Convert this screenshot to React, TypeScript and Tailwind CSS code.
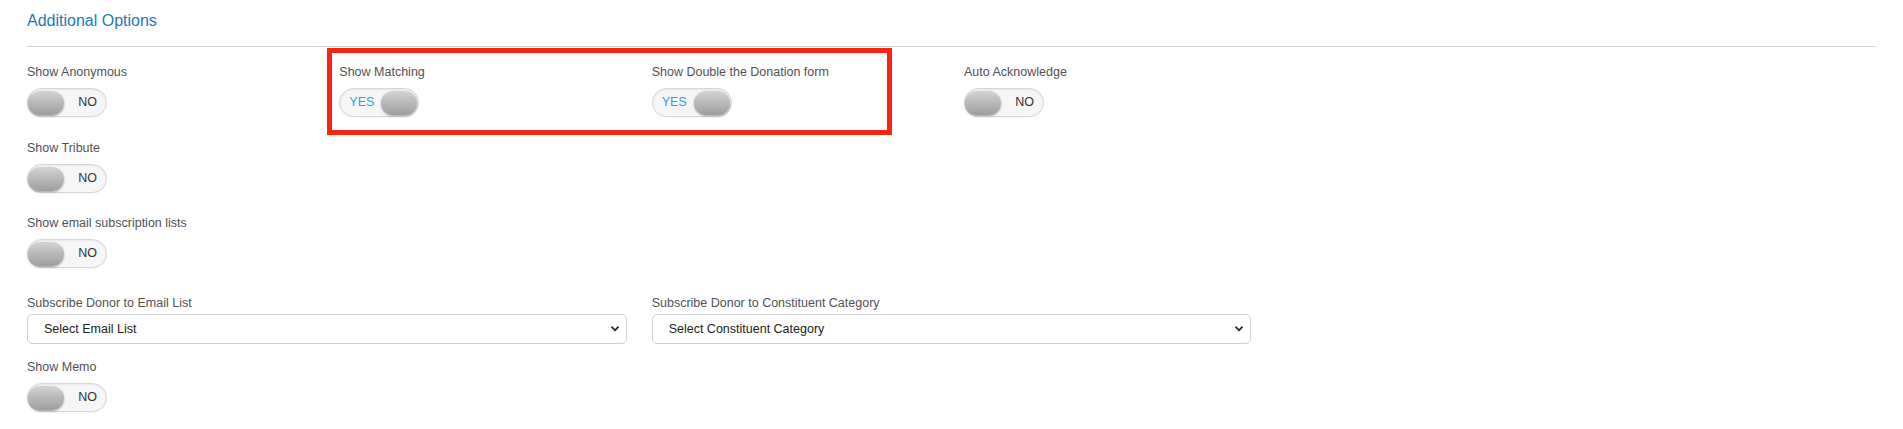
import { type ReactNode } from 'react';

const font = { fontFamily: '"Liberation Sans", Arial, Helvetica, sans-serif' };

function Toggle({ on }: { on: boolean }) {
  return (
    <div
      className={`flex h-[29px] w-[80px] items-center justify-between rounded-full border border-[#d6d6d6] bg-[#f6f6f6] shadow-[inset_0_1px_2px_rgba(0,0,0,0.06),0_1px_1px_rgba(0,0,0,0.04)] ${
        on ? 'pl-[9px] pr-[1px]' : 'pl-0 pr-[9px]'
      }`}
    >
      {on ? (
        <>
          <span className="text-[12.5px] leading-none text-[#2aa3e6]">YES</span>
          <span className="h-[24px] w-[36px] rounded-full bg-linear-to-b from-[#d4d4d4] to-[#9d9d9d] shadow-[0_1px_2px_rgba(0,0,0,0.35)]" />
        </>
      ) : (
        <>
          <span className="h-[24px] w-[36px] rounded-full bg-linear-to-b from-[#d4d4d4] to-[#9d9d9d] shadow-[0_1px_2px_rgba(0,0,0,0.35)]" />
          <span className="text-[12.5px] leading-none text-[#333]">NO</span>
        </>
      )}
    </div>
  );
}

function Label({ children }: { children: ReactNode }) {
  return <div className="text-[12.5px] leading-[18px] text-[#525252]">{children}</div>;
}

function ToggleField({ label, on = false }: { label: string; on?: boolean }) {
  return (
    <div>
      <Label>{label}</Label>
      <div className="mt-[7px]">
        <Toggle on={on} />
      </div>
    </div>
  );
}

function SelectField({ label, placeholder }: { label: string; placeholder: string }) {
  return (
    <div className="col-span-2">
      <Label>{label}</Label>
      <div className="relative mt-[2px]">
        <select
          defaultValue=""
          className="block h-[30px] w-full appearance-none rounded-[5px] border border-[#cfd2d6] bg-white pl-4 pr-8 text-[12.5px] text-[#222] outline-none"
          style={font}
        >
          <option value="">{placeholder}</option>
        </select>
        {/* chevron */}
        <svg
          className="pointer-events-none absolute right-[8px] top-1/2 -translate-y-1/2"
          width="8"
          height="6"
          viewBox="0 0 8 6"
          fill="none"
        >
          <polyline points="1,1.2 4,4.4 7,1.2" stroke="#2b2b2b" strokeWidth="1.8" strokeLinecap="round" strokeLinejoin="round" />
        </svg>
      </div>
    </div>
  );
}

export default function App() {
  return (
    <div className="min-h-[429px] bg-white px-[27px] pt-[10px]" style={font}>
      <h2 className="text-[16px] leading-[22px] text-[#1b79b8]">Additional Options</h2>
      <div className="mt-[14px] h-px bg-[#d2d2d2]" />

      {/* row 1 */}
      <div className="mt-[16px] grid grid-cols-6 gap-x-[25px]">
        <ToggleField label="Show Anonymous" />
        <div className="relative col-span-2 grid grid-cols-2 gap-x-[25px]">
          <ToggleField label="Show Matching" on />
          <ToggleField label="Show Double the Donation form" on />
          {/* red highlight annotation */}
          <div className="pointer-events-none absolute -bottom-[18px] -left-[12px] -top-[15px] right-[47px] border-[5px] border-[#fa2210]" />
        </div>
        <ToggleField label="Auto Acknowledge" />
      </div>

      <div className="mt-[22px] grid grid-cols-6 gap-x-[25px]">
        <ToggleField label="Show Tribute" />
      </div>

      <div className="mt-[21px] grid grid-cols-6 gap-x-[25px]">
        <ToggleField label="Show email subscription lists" />
      </div>

      <div className="mt-[26px] grid grid-cols-6 gap-x-[25px]">
        <SelectField label="Subscribe Donor to Email List" placeholder="Select Email List" />
        <SelectField label="Subscribe Donor to Constituent Category" placeholder="Select Constituent Category" />
      </div>

      <div className="mt-[14px] grid grid-cols-6 gap-x-[25px]">
        <ToggleField label="Show Memo" />
      </div>
    </div>
  );
}
